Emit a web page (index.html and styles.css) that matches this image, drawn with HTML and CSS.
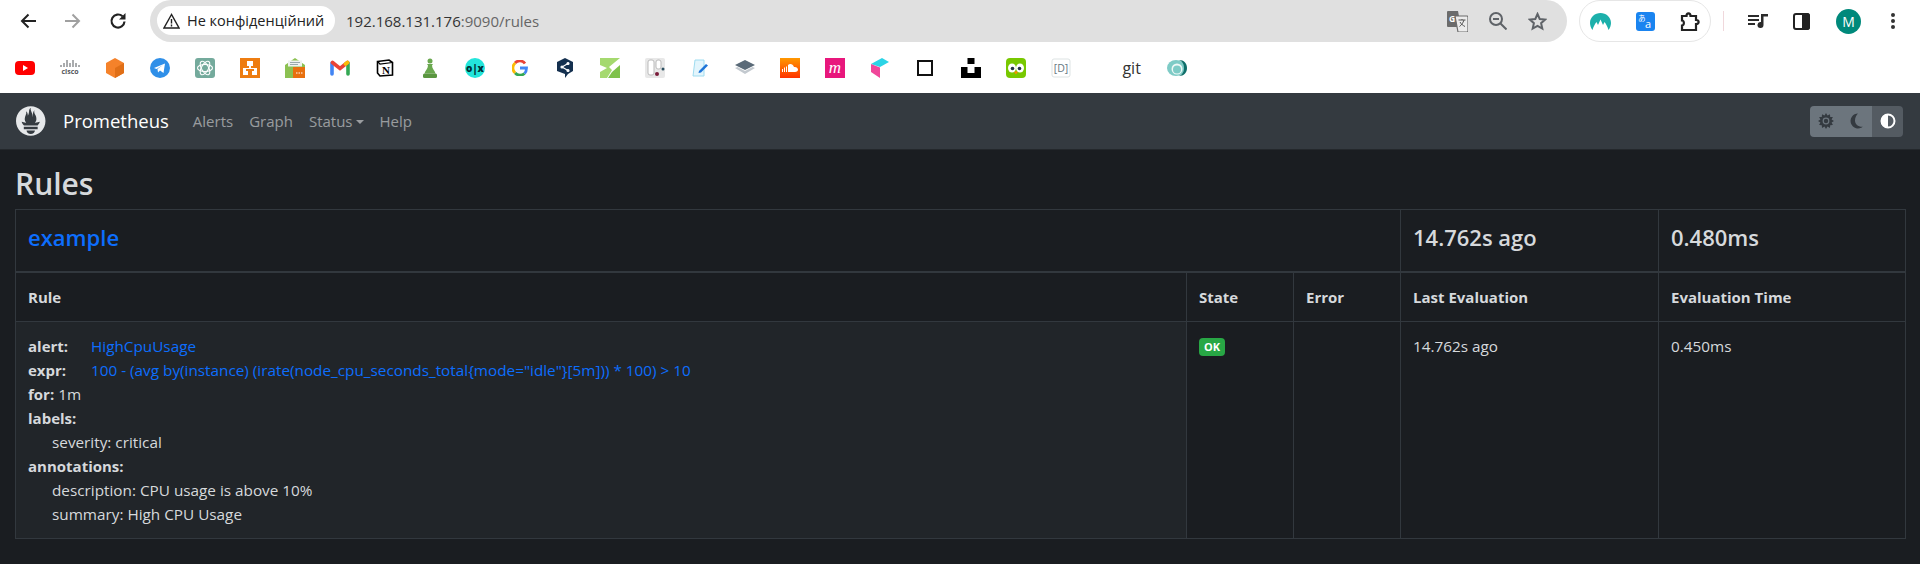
FILE: index.html
```html
<!DOCTYPE html>
<html lang="en">

<head>
    <meta charset="UTF-8">
    <meta name="viewport" content="width=device-width, initial-scale=1.0">
    <title>Prometheus Time Series Collection and Processing Server</title>
    <link rel="stylesheet" href="styles.css">
</head>

<body>
    <!-- Browser toolbar -->
    <header class="toolbar">
        <div class="nav-buttons">
            <button class="tool-button"><svg width="18" height="18" viewBox="0 0 18 18" fill="none" stroke="#222" stroke-width="2"><path d="M17 9H3M9.500 2.500 3 9l6.500 6.500"/></svg></button>
            <button class="tool-button"><svg width="18" height="18" viewBox="0 0 18 18" fill="none" stroke="#a0a0a0" stroke-width="2"><path d="M1 9h14M8.500 2.500 15 9l-6.500 6.500"/></svg></button>
            <button class="tool-button"><svg width="18" height="18" viewBox="0 0 18 18" fill="none" stroke="#222" stroke-width="2.200"><path d="M15.500 9.500a6.500 6.500 0 1 1-2-5.200"/><path d="M16.500 1v6.500H10z" fill="#222" stroke="none"/></svg></button>
        </div>
        <div class="address-bar">
            <div class="security-chip">
                <svg width="17" height="16" viewBox="0 0 17 16" fill="none" stroke="#222" stroke-width="1.400"><path d="M8.500 1.500 1 15h15z"/><path d="M8.500 6v4.500M8.500 11.500V13.500"/></svg>
                <span>Не конфіденційний</span>
            </div>
            <div class="url">192.168.131.176<span class="url-dim">:9090/rules</span></div>
            <div class="address-icons">
                <svg width="21" height="21" viewBox="0 0 21 21"><path d="M1 0h10l3 16H1a1 1 0 0 1-1-1V1a1 1 0 0 1 1-1z" fill="#6b6b6b"/><path d="M8 5h12a1 1 0 0 1 1 1v14a1 1 0 0 1-1 1H11z" fill="#ececec" stroke="#6b6b6b" stroke-width="1.200"/><text x="2" y="11" class="icon-text" fill="#fff" font-size="8.500" font-weight="700">G</text><path d="M11.500 9h7M15 8v1M17 9c-1 3-2.500 5-4.500 6.500M13 11c1 2 3 3.500 5 4.500" stroke="#555" fill="none"/></svg>
                <svg width="18" height="18" viewBox="0 0 18 18" fill="none" stroke="#5f6368" stroke-width="2"><circle cx="7" cy="7" r="6"/><path d="M4 7h6M11.500 11.500 17.500 17.500"/></svg>
                <svg width="19" height="19" viewBox="0 0 19 19" fill="none" stroke="#5f6368" stroke-width="2"><path d="m9.500 2 2.200 5 5.500.5-4.100 3.700 1.200 5.400-4.800-2.800-4.800 2.800 1.200-5.400L1.800 7.500l5.500-.5z"/></svg>
            </div>
        </div>
        <div class="extensions">
            <svg width="21" height="17" viewBox="0 0 21 17"><path d="M10.500 0C16 0 21 4 21 10c0 2.500-1 5-2.500 7-1-3.500-2.500-6-4-8l-1.500 3-2.500-5.500L8 12 6.500 9c-1.500 2-3 4.500-4 8C1 15 0 12.500 0 10 0 4 5 0 10.500 0z" fill="#1cb0ab"/></svg>
            <svg width="19" height="19" viewBox="0 0 19 19"><rect width="19" height="19" rx="3" fill="#1a84f0"/><text x="2" y="9" class="cjk-text" fill="#fff" font-size="7.500">あ</text><text x="9" y="16" class="icon-text" fill="#fff" font-size="11">a</text></svg>
            <svg width="21" height="19" viewBox="0 0 21 19" fill="none" stroke="#222" stroke-width="2.200"><path d="M2 4h4.500c0-3.500 4-3.500 4 0H16v4c3.500 0 3.500 4 0 4v6H2v-4.500c2.500 0 2.500-5 0-5z"/></svg>
        </div>
        <div class="toolbar-divider"></div>
        <div class="profile-tools">
            <svg class="media-icon" width="20" height="14" viewBox="0 0 20 14" fill="#2b2b2b"><path d="M0 1h11v2H0zM0 5h11v2H0zM0 9h7v2H0z"/><path d="M13 0h7v2.500h-4.500V11a3 3 0 1 1-2.500-3z"/></svg>
            <svg class="panel-icon" width="17" height="17" viewBox="0 0 17 17" fill="none" stroke="#222" stroke-width="2"><rect x="1" y="1" width="15" height="15" rx="2"/><path d="M10 1h4a2 2 0 0 1 2 2v11a2 2 0 0 1-2 2h-4z" fill="#222"/></svg>
            <div class="account">M</div>
            <svg class="menu-icon" width="6" height="18" viewBox="0 0 6 18" fill="#333"><circle cx="3" cy="3" r="2"/><circle cx="3" cy="9" r="2"/><circle cx="3" cy="15" r="2"/></svg>
        </div>
    </header>

    <!-- Bookmarks -->
    <div class="bookmarks">
        <span class="bookmark"><svg width="20" height="20" viewBox="0 0 20 20"><rect y="3" width="20" height="14" rx="4" fill="#f00"/><path d="m8 7 5 3-5 3z" fill="#fff"/></svg></span>
        <span class="bookmark"><svg width="20" height="20" viewBox="0 0 20 20"><path d="M1 7v2M4 5v4M7 2v7M10 5v4M13 2v7M16 5v4M19 7v2" stroke="#55585c" fill="none"/><text x="10" y="16" text-anchor="middle" class="icon-text" fill="#55585c" font-size="7" font-weight="700">cisco</text></svg></span>
        <span class="bookmark"><svg width="20" height="20" viewBox="0 0 20 20"><path d="m10 0 9 5v10l-9 5-9-5V5z" fill="#f5822a"/><path d="M10 10v10l9-5V5z" fill="#e06f17"/></svg></span>
        <span class="bookmark"><svg width="20" height="20" viewBox="0 0 20 20"><circle cx="10" cy="10" r="10" fill="#2f8fe8"/><path d="M4 10 15 5.500 13.500 15l-3.500-2.500-2 2-.5-3.500L13 7l-6.500 4z" fill="#fff"/></svg></span>
        <span class="bookmark"><svg width="20" height="20" viewBox="0 0 20 20"><rect width="20" height="20" rx="3" fill="#74aa9c"/><g fill="none" stroke="#fff" stroke-width="1.100"><ellipse cx="10" cy="10" rx="7.500" ry="3.500"/><ellipse cx="10" cy="10" rx="7.500" ry="3.500" transform="rotate(60 10 10)"/><ellipse cx="10" cy="10" rx="7.500" ry="3.500" transform="rotate(120 10 10)"/></g></svg></span>
        <span class="bookmark"><svg width="20" height="20" viewBox="0 0 20 20"><rect width="20" height="20" fill="#ee7d11"/><path d="M7 3h6v5h-2v2h6v7h-5v-4h2v-2H6v2h2v4H3v-7h6V8H7z" fill="#fff"/></svg></span>
        <span class="bookmark"><svg width="20" height="20" viewBox="0 0 20 20"><path d="M0 7 10 0l10 7v13H0z" fill="#8cc152"/><rect x="3" y="2.500" width="14" height="6" fill="#eef2ee"/><path d="M5 4.500h10M5 6.500h8" stroke="#9aa"/><rect x="8" y="9" width="12" height="11" fill="#e8700f"/><path d="M11 15h1.500M13.500 15H15M16 15h1.500" stroke="#fff"/></svg></span>
        <span class="bookmark"><svg width="20" height="17" viewBox="0 0 20 17" fill="none" stroke-width="3.600" stroke-linecap="round"><path d="M2 15V4" stroke="#4285f4"/><path d="M18 15V4" stroke="#34a853"/><path d="m2.500 3.500 7.500 6 7.500-6" stroke="#ea4335"/><path d="m15.500 5 2-1.500" stroke="#fbbc05"/></svg></span>
        <span class="bookmark"><svg width="18" height="18" viewBox="0 0 18 18"><path d="M1.500 2.500 13 1l3.500 2.500V16L4 17l-2.500-3z" fill="#fff" stroke="#000" stroke-width="1.600"/><path d="M1.500 2.500 4 5l12.500-1.500" fill="none" stroke="#000" stroke-width="1.200"/><text x="10" y="14.500" text-anchor="middle" class="serif-text" fill="#000" font-size="11" font-weight="700">N</text></svg></span>
        <span class="bookmark"><svg width="14" height="20" viewBox="0 0 14 20"><circle cx="7" cy="3" r="2.500" fill="#6aa84f"/><path d="M4 6h6l-1 1.500c0 3 3 5.500 3.500 8h-11C2 13 5 10.500 5 7.500z" fill="#6aa84f"/><rect y="15.500" width="14" height="4.500" rx="1.500" fill="#5a9640"/></svg></span>
        <span class="bookmark"><svg width="20" height="20" viewBox="0 0 20 20"><circle cx="10" cy="10" r="10" fill="#23e5db"/><text x="10" y="13.500" text-anchor="middle" class="icon-text" fill="#002f34" font-size="10" font-weight="800">o|x</text></svg></span>
        <span class="bookmark"><svg width="16" height="16" viewBox="0 0 16 16" fill="none" stroke-width="2.800"><path d="M13 3.500A6.500 6.500 0 0 0 3 3" stroke="#ea4335"/><path d="M3.200 3a6.500 6.500 0 0 0 0 10" stroke="#fbbc05"/><path d="M3.200 13a6.500 6.500 0 0 0 9.300.5" stroke="#34a853"/><path d="M12.500 13.500c1.300-1.200 2-3 2-5.500H8" stroke="#4285f4"/></svg></span>
        <span class="bookmark"><svg width="16" height="20" viewBox="0 0 16 20"><path d="m8 0 8 4v9l-5 3-3 4v-4l-8-3V4z" fill="#14304f"/><g stroke="#fff" stroke-width="1.200" fill="#fff"><path d="m5 9 6-3.500M5 9l6 3.500" fill="none"/><circle cx="5" cy="9" r="1"/><circle cx="11" cy="5.500" r="1"/><circle cx="11" cy="12.500" r="1"/></g></svg></span>
        <span class="bookmark"><svg width="20" height="20" viewBox="0 0 20 20"><path d="M0 0h20L9 9l3 3-5 8H0v-6l7-4-7-3z" fill="#a5d96f" /><path d="M20 7v13H8l4-6z" fill="#7fc24b"/></svg></span>
        <span class="bookmark"><svg width="20" height="20" viewBox="0 0 20 20"><rect width="20" height="20" rx="2" fill="#e8e8e8"/><rect x="3" y="2" width="6" height="15" rx="2" fill="#fff" stroke="#bbb"/><rect x="11" y="2" width="5" height="9" rx="2" fill="#fff" stroke="#bbb"/><circle cx="12" cy="16" r="2" fill="#7a1c3a"/><circle cx="18" cy="11" r="1.500" fill="#2c4f5f"/></svg></span>
        <span class="bookmark"><svg width="18" height="18" viewBox="0 0 18 18"><path d="M4 1h9v16H2z" fill="#e3f5fc" stroke="#9fdcf0"/><path d="m8 12 7-7 2 1.500-7 7L7.500 14z" fill="#1f75d8"/></svg></span>
        <span class="bookmark"><svg width="20" height="16" viewBox="0 0 20 16"><path d="m10 0 10 5-10 5L0 5z" fill="#5a6a78"/><path d="m0 8 2.500-1L10 11l7.500-4L20 8l-10 6z" fill="#c3c9cf"/></svg></span>
        <span class="bookmark"><svg width="20" height="20" viewBox="0 0 20 20"><defs><linearGradient id="sc" x1="0" y1="0" x2="0" y2="1"><stop offset="0" stop-color="#f90"/><stop offset="1" stop-color="#f30"/></linearGradient></defs><rect width="20" height="20" fill="url(#sc)"/><path d="M2 14v-3h1v3zM4 14V9.500h1V14zM6 14V8.500h1V14zM8 14V7c2-2 5-1 6 2 2-.5 4 1 4 2.500S17 14 15 14z" fill="#fff"/></svg></span>
        <span class="bookmark"><svg width="20" height="20" viewBox="0 0 20 20"><rect width="20" height="20" fill="#e8177c"/><text x="10" y="14.500" text-anchor="middle" class="serif-text" fill="#fff" font-size="17" font-style="italic">m</text></svg></span>
        <span class="bookmark"><svg width="18" height="20" viewBox="0 0 18 20"><path d="M0 6 11 0l7 4-9 5z" fill="#2bd4e6"/><path d="M0 6l9 3.500V20l-9-6z" fill="#f0479a"/></svg></span>
        <span class="bookmark"><svg width="16" height="16" viewBox="0 0 16 16"><rect x="1" y="1" width="14" height="14" fill="#fff" stroke="#111" stroke-width="2"/></svg></span>
        <span class="bookmark"><svg width="20" height="20" viewBox="0 0 20 20"><path d="M6.500 0h7v6h-7zM0 9h6.500v6h7V9H20v11H0z"/></svg></span>
        <span class="bookmark"><svg width="20" height="20" viewBox="0 0 20 20"><rect width="20" height="20" rx="4" fill="#78c800"/><ellipse cx="6" cy="10" rx="4" ry="4.500" fill="#fff"/><ellipse cx="14" cy="10" rx="4" ry="4.500" fill="#fff"/><circle cx="6.500" cy="10.500" r="1.800" fill="#234"/><circle cx="13.500" cy="10.500" r="1.800" fill="#234"/><path d="m8 14 2-1 2 1-2 2.500z" fill="#f49000"/></svg></span>
        <span class="bookmark"><svg width="20" height="20" viewBox="0 0 20 20"><rect x="1" y="1" width="18" height="18" rx="2" fill="#fff" stroke="#dde3e3"/><text x="10" y="14" text-anchor="middle" class="icon-text" fill="#66777f" font-size="10.500">[D]</text></svg></span>
        <span class="bookmark bookmark-git">git</span>
        <span class="bookmark"><svg width="20" height="16" viewBox="0 0 20 16"><ellipse cx="9" cy="8" rx="9" ry="8" fill="#7ecbc6"/><path d="M12 0c5 0 8 3.500 8 8s-3 8-8 8c4-2 5-4.500 5-8s-1-6-5-8z" fill="#0f6f6a"/><circle cx="10" cy="9" r="5.500" fill="#eef8f7"/><circle cx="10" cy="9.500" r="4" fill="#7ecbc6"/></svg></span>
    </div>

    <!-- Prometheus navbar -->
    <nav class="navbar">
        <a href="#" class="brand">
            <svg class="logo" width="30" height="30" viewBox="0 0 115.333 114"><path fill="#e6e8ea" d="M56.667.667C25.372.667 0 26.036 0 57.332c0 31.295 25.372 56.666 56.667 56.666s56.666-25.371 56.666-56.666C113.333 26.036 87.961.667 56.667.667zm0 106.055c-8.904 0-16.123-5.948-16.123-13.283H72.790c0 7.334-7.219 13.283-16.123 13.283zM83.297 89.040H30.034v-9.658h53.264v9.658zm-.191-14.629H30.186c-.176-.203-.356-.403-.526-.609-5.452-6.620-6.736-10.076-7.983-13.598-.021-.116 6.611 1.355 11.314 2.413 0 0 2.420.560 5.958 1.205-3.397-3.982-5.414-9.044-5.414-14.218 0-11.359 8.712-21.285 5.569-29.308 3.059.249 6.331 6.456 6.552 16.161 3.252-4.494 4.613-12.701 4.613-17.733 0-5.210 3.433-11.262 6.867-11.469-3.061 5.045.793 9.370 4.219 20.099 1.285 4.030 1.121 10.812 2.113 15.113.329-8.933 1.865-21.967 7.532-26.467-2.500 5.667.370 12.758 2.333 16.167 3.167 5.500 5.087 9.667 5.087 17.548 0 5.284-1.951 10.259-5.242 14.148 3.742-.702 6.326-1.335 6.326-1.335l12.152-2.371c.001-.001-1.765 7.261-8.550 14.254z"/></svg>
            <span>Prometheus</span>
        </a>
        <a href="#" class="nav-link">Alerts</a>
        <a href="#" class="nav-link">Graph</a>
        <a href="#" class="nav-link dropdown">Status</a>
        <a href="#" class="nav-link">Help</a>
        <div class="theme-toggle">
            <button class="theme-button"><svg width="16" height="16" viewBox="0 0 16 16"><path fill="#343a40" d="m8 0 1.500 2.600L12 1.200l.2 2.700 2.700.1-1.300 2.500L16 8l-2.400 1.500 1.300 2.500-2.700.2-.2 2.700-2.500-1.300L8 16l-1.500-2.400L4 14.900l-.2-2.700-2.700-.2 1.300-2.500L0 8l2.400-1.500L1.100 4l2.700-.1.200-2.700 2.500 1.400z"/><circle cx="8" cy="8" r="3.400" fill="#6c757d"/><circle cx="8" cy="8" r="2.200" fill="#343a40"/></svg></button>
            <button class="theme-button"><svg width="16" height="16" viewBox="0 0 16 16"><path fill="#343a40" d="M9 .5a7.500 7.500 0 1 0 4.800 13.300C9 14 6 11 6 7.500c0-3 1.500-5.500 3-7z"/></svg></button>
            <button class="theme-button active"><svg width="16" height="16" viewBox="0 0 16 16"><circle cx="8" cy="8" r="6.500" fill="none" stroke="#fff" stroke-width="2"/><path fill="#fff" d="M8 1a7 7 0 0 0 0 14z"/></svg></button>
        </div>
    </nav>

    <!-- Rules page -->
    <main class="container">
        <h1>Rules</h1>
        <table class="rules-table">
            <colgroup>
                <col class="col-rule">
                <col class="col-state">
                <col class="col-error">
                <col class="col-last">
                <col class="col-time">
            </colgroup>
            <thead>
                <tr class="group-row">
                    <td colspan="3"><a href="#">example</a></td>
                    <td>14.762s ago</td>
                    <td>0.480ms</td>
                </tr>
                <tr class="head-row">
                    <td>Rule</td>
                    <td>State</td>
                    <td>Error</td>
                    <td>Last Evaluation</td>
                    <td>Evaluation Time</td>
                </tr>
            </thead>
            <tbody>
                <tr>
                    <td class="rule-cell">
                        <div><strong class="rule-key">alert:</strong><a href="#">HighCpuUsage</a></div>
                        <div><strong class="rule-key">expr:</strong><a href="#">100 - (avg by(instance) (irate(node_cpu_seconds_total{mode="idle"}[5m])) * 100) &gt; 10</a></div>
                        <div><strong>for:</strong> 1m</div>
                        <div><strong>labels:</strong></div>
                        <div class="indent">severity: critical</div>
                        <div><strong>annotations:</strong></div>
                        <div class="indent">description: CPU usage is above 10%</div>
                        <div class="indent">summary: High CPU Usage</div>
                    </td>
                    <td><span class="badge">OK</span></td>
                    <td></td>
                    <td>14.762s ago</td>
                    <td>0.450ms</td>
                </tr>
            </tbody>
        </table>
    </main>
</body>

</html>
```

FILE: styles.css
```css
/* Reset styles */

* {
    margin: 0;
    padding: 0;
    box-sizing: border-box;
}

body {
    font-family: "Open Sans", sans-serif;
    font-size: 15px;
    line-height: 24px;
    background-color: #1a1d21;
    color: #d6d9dc;
    height: 564px;
    overflow: hidden;
}

a {
    text-decoration: none;
}

button {
    border: none;
    background: none;
}

svg {
    display: block;
}

.icon-text {
    font-family: "Open Sans", sans-serif;
}

.serif-text {
    font-family: "Liberation Serif", serif;
}

.cjk-text {
    font-family: "Noto Sans CJK JP", sans-serif;
}
/* Browser toolbar */

.toolbar {
    height: 42px;
    background-color: #fff;
    display: flex;
    align-items: center;
}

.nav-buttons {
    display: flex;
    padding-left: 5px;
    width: 150px;
}

.tool-button {
    width: 45px;
    height: 42px;
    display: flex;
    align-items: center;
    justify-content: center;
}

.address-bar {
    flex: 1;
    height: 42px;
    background-color: #e0e0e0;
    border-radius: 21px;
    display: flex;
    align-items: center;
    padding-left: 7px;
    color: #333;
}

.security-chip {
    width: 178px;
    height: 29px;
    margin-bottom: 1px;
    background-color: #fff;
    border-radius: 15px;
    display: flex;
    align-items: center;
    gap: 7px;
    padding-left: 6px;
    font-size: 14.5px;
    color: #222;
}

.url {
    margin-left: 11px;
    font-size: 15px;
    color: #333;
}

.url-dim {
    color: #666;
}

.address-icons {
    margin-left: auto;
    padding-right: 20px;
    display: flex;
    align-items: center;
    gap: 21px;
}

.extensions {
    width: 132px;
    height: 42px;
    margin-left: 12px;
    border: 1px solid #e6e6e6;
    border-radius: 21px;
    display: flex;
    align-items: center;
    justify-content: space-between;
    padding: 0 9px 0 10px;
}

.toolbar-divider {
    width: 1px;
    height: 20px;
    margin: 0 24px 0 12px;
    background-color: #f0d8dc;
}

.profile-tools {
    width: 172px;
    display: flex;
    align-items: center;
}

.panel-icon {
    margin-left: 25px;
}

.account {
    width: 25px;
    height: 25px;
    margin-left: 26px;
    border-radius: 50%;
    background-color: #00897b;
    color: #fff;
    font-size: 14px;
    line-height: 25px;
    text-align: center;
}

.menu-icon {
    margin-left: 29px;
}
/* Bookmarks */

.bookmarks {
    height: 51px;
    background-color: #fff;
    display: flex;
    align-items: center;
    padding-left: 2px;
}

.bookmark {
    width: 45.06px;
    height: 24px;
    display: flex;
    align-items: center;
    justify-content: center;
}

.bookmark-git {
    width: 45px;
    margin-left: 26px;
    font-size: 16px;
    color: #333;
}
/* Navbar */

.navbar {
    height: 57px;
    background-color: #343a40;
    border-bottom: 1px solid #24282c;
    display: flex;
    align-items: center;
    padding: 0 17px 0 16px;
}

.brand {
    display: flex;
    align-items: center;
    gap: 17px;
    color: #fff;
    font-size: 18.5px;
    margin-right: 24px;
}

.nav-link {
    color: rgba(255, 255, 255, 0.5);
    margin-right: 16px;
}

.dropdown::after {
    content: "";
    display: inline-block;
    margin-left: 3px;
    vertical-align: 3px;
    border-top: 4.5px solid;
    border-left: 4.5px solid transparent;
    border-right: 4.5px solid transparent;
}

.theme-toggle {
    margin-left: auto;
    display: flex;
    border-radius: 4px;
    overflow: hidden;
}

.theme-button {
    width: 31px;
    height: 31px;
    background-color: #6c757d;
    display: flex;
    align-items: center;
    justify-content: center;
}

.theme-button.active {
    background-color: #545b62;
}
/* Rules page */

.container {
    padding: 0 15px;
}

h1 {
    font-size: 30px;
    font-weight: 600;
    line-height: 36px;
    color: #d6d9dc;
    padding-top: 16px;
    margin-bottom: 7px;
}

.rules-table {
    width: 1890px;
    table-layout: fixed;
    border-collapse: collapse;
    font-size: 15.3px;
}

.rules-table td {
    border: 1px solid #32383e;
    padding: 12px;
    vertical-align: top;
}

.col-rule {
    width: 1171px;
}

.col-state {
    width: 107px;
}

.col-error {
    width: 107px;
}

.col-last {
    width: 258px;
}

.col-time {
    width: 247px;
}

.rules-table .group-row td {
    padding: 8px 12px 15px;
    font-size: 22px;
    font-weight: 600;
    line-height: 38px;
    border-bottom-width: 2px;
}

.group-row a,
.rule-cell a {
    color: #0d6efd;
}

.head-row td {
    font-size: 15px;
    font-weight: 700;
}

.rules-table .rule-cell {
    background-color: #212529;
}

.rule-key {
    display: inline-block;
    width: 63px;
}

strong {
    font-size: 15px;
    font-weight: 700;
}

.indent {
    padding-left: 24px;
}

.badge {
    display: inline-block;
    width: 26px;
    height: 18px;
    margin-top: 4px;
    background-color: #28a745;
    border-radius: 4px;
    color: #fff;
    font-size: 11px;
    font-weight: 700;
    line-height: 18px;
    text-align: center;
    vertical-align: top;
}
```
